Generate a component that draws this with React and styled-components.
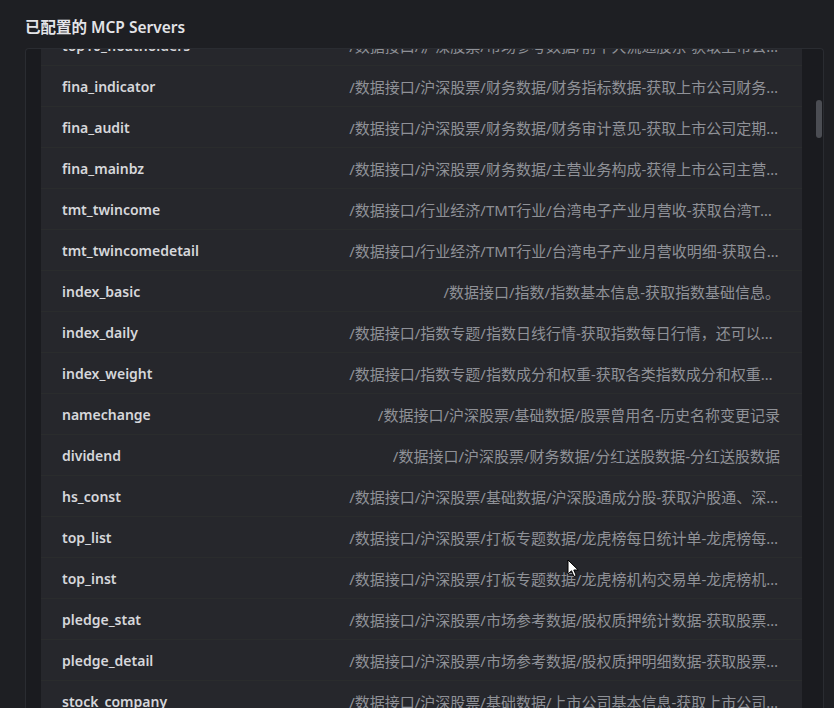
import { useLayoutEffect, useRef } from 'react';
import styled, { createGlobalStyle } from 'styled-components';

const servers = [
  ['top10_floatholders', '/数据接口/沪深股票/市场参考数据/前十大流通股东-获取上市公司前十大流通股东数据'],
  ['fina_indicator', '/数据接口/沪深股票/财务数据/财务指标数据-获取上市公司财务指标数据'],
  ['fina_audit', '/数据接口/沪深股票/财务数据/财务审计意见-获取上市公司定期财务审计意见数据'],
  ['fina_mainbz', '/数据接口/沪深股票/财务数据/主营业务构成-获得上市公司主营业务构成'],
  ['tmt_twincome', '/数据接口/行业经济/TMT行业/台湾电子产业月营收-获取台湾TMT电子产业领域各类产品月度营收数据'],
  ['tmt_twincomedetail', '/数据接口/行业经济/TMT行业/台湾电子产业月营收明细-获取台湾TMT行业上市公司各类产品月度营收情况'],
  ['index_basic', '/数据接口/指数/指数基本信息-获取指数基础信息。'],
  ['index_daily', '/数据接口/指数专题/指数日线行情-获取指数每日行情，还可以通过bar接口获取'],
  ['index_weight', '/数据接口/指数专题/指数成分和权重-获取各类指数成分和权重，月度数据'],
  ['namechange', '/数据接口/沪深股票/基础数据/股票曾用名-历史名称变更记录'],
  ['dividend', '/数据接口/沪深股票/财务数据/分红送股数据-分红送股数据'],
  ['hs_const', '/数据接口/沪深股票/基础数据/沪深股通成分股-获取沪股通、深股通成分数据'],
  ['top_list', '/数据接口/沪深股票/打板专题数据/龙虎榜每日统计单-龙虎榜每日交易明细'],
  ['top_inst', '/数据接口/沪深股票/打板专题数据/龙虎榜机构交易单-龙虎榜机构成交明细'],
  ['pledge_stat', '/数据接口/沪深股票/市场参考数据/股权质押统计数据-获取股票质押统计数据'],
  ['pledge_detail', '/数据接口/沪深股票/市场参考数据/股权质押明细数据-获取股票质押明细数据'],
  ['stock_company', '/数据接口/沪深股票/基础数据/上市公司基本信息-获取上市公司基础信息'],
  ['stk_managers', '/数据接口/沪深股票/基础数据/上市公司管理层-获取上市公司管理层'],
];

export default function App() {
  const listRef = useRef(null);

  useLayoutEffect(() => {
    // the list is shown scrolled a little past its first row
    if (listRef.current) listRef.current.scrollTop = 24;
  }, []);

  return (
    <Page>
      <GlobalStyle />
      <Header>
        <Title>已配置的 MCP Servers</Title>
      </Header>
      <Panel>
        <List ref={listRef}>
          {servers.map(([name, desc]) => (
            <Row key={name}>
              <Name>{name}</Name>
              <Desc title={desc}>{desc}</Desc>
            </Row>
          ))}
        </List>
        <Gutter>
          <Thumb />
        </Gutter>
      </Panel>
      <Cursor viewBox="0 0 12 19" width="12" height="19">
        <path d="M1 1 L1 15 L4.5 11.8 L7 17.5 L9.2 16.6 L6.8 11 L11.2 11 Z" fill="#fff" stroke="#000" strokeWidth="1" strokeLinejoin="round" />
      </Cursor>
    </Page>
  );
}

const GlobalStyle = createGlobalStyle`
  html, body {
    margin: 0;
    padding: 0;
    background: #1e1f23;
    overflow: hidden;
  }
`;

const Page = styled.div`
  position: relative;
  width: 834px;
  height: 708px;
  overflow: hidden;
  background: #1e1f23;
  font-family: 'Noto Sans', 'Noto Sans CJK SC', sans-serif;
`;

const Header = styled.div`
  height: 48px;
  padding: 4px 25px 0;
  display: flex;
  align-items: center;
  box-sizing: border-box;
`;

const Title = styled.h2`
  margin: 0;
  font-size: 15.5px;
  font-weight: 600;
  color: #e3e4e8;
`;

const Panel = styled.div`
  margin: 0 10px 0 25px;
  height: 680px;
  display: flex;
  background: #1a1b1f;
  border: 1px solid #2a2c31;
  border-bottom: none;
  border-radius: 4px 4px 0 0;
  padding-left: 15px;
`;

const List = styled.div`
  flex: 1;
  min-width: 0;
  background: #26272c;
  overflow: hidden;
`;

const Row = styled.div`
  height: 41px;
  box-sizing: border-box;
  padding: 0 22px 0 21px;
  display: flex;
  align-items: center;
  justify-content: space-between;
  gap: 20px;
  border-bottom: 1px solid #2a2c2d;
`;

const Name = styled.span`
  flex-shrink: 0;
  font-size: 14px;
  font-weight: 600;
  color: #d6d7db;
`;

const Desc = styled.span`
  max-width: 60%;
  overflow: hidden;
  white-space: nowrap;
  text-overflow: ellipsis;
  text-align: right;
  font-size: 15px;
  color: #8f9197;
`;

const Gutter = styled.div`
  position: relative;
  width: 21px;
  flex-shrink: 0;
`;

const Thumb = styled.div`
  position: absolute;
  top: 51px;
  right: 1px;
  width: 6px;
  height: 38px;
  border-radius: 3px;
  background: #4b4d53;
`;

const Cursor = styled.svg`
  position: absolute;
  left: 567px;
  top: 559px;
  pointer-events: none;
`;
